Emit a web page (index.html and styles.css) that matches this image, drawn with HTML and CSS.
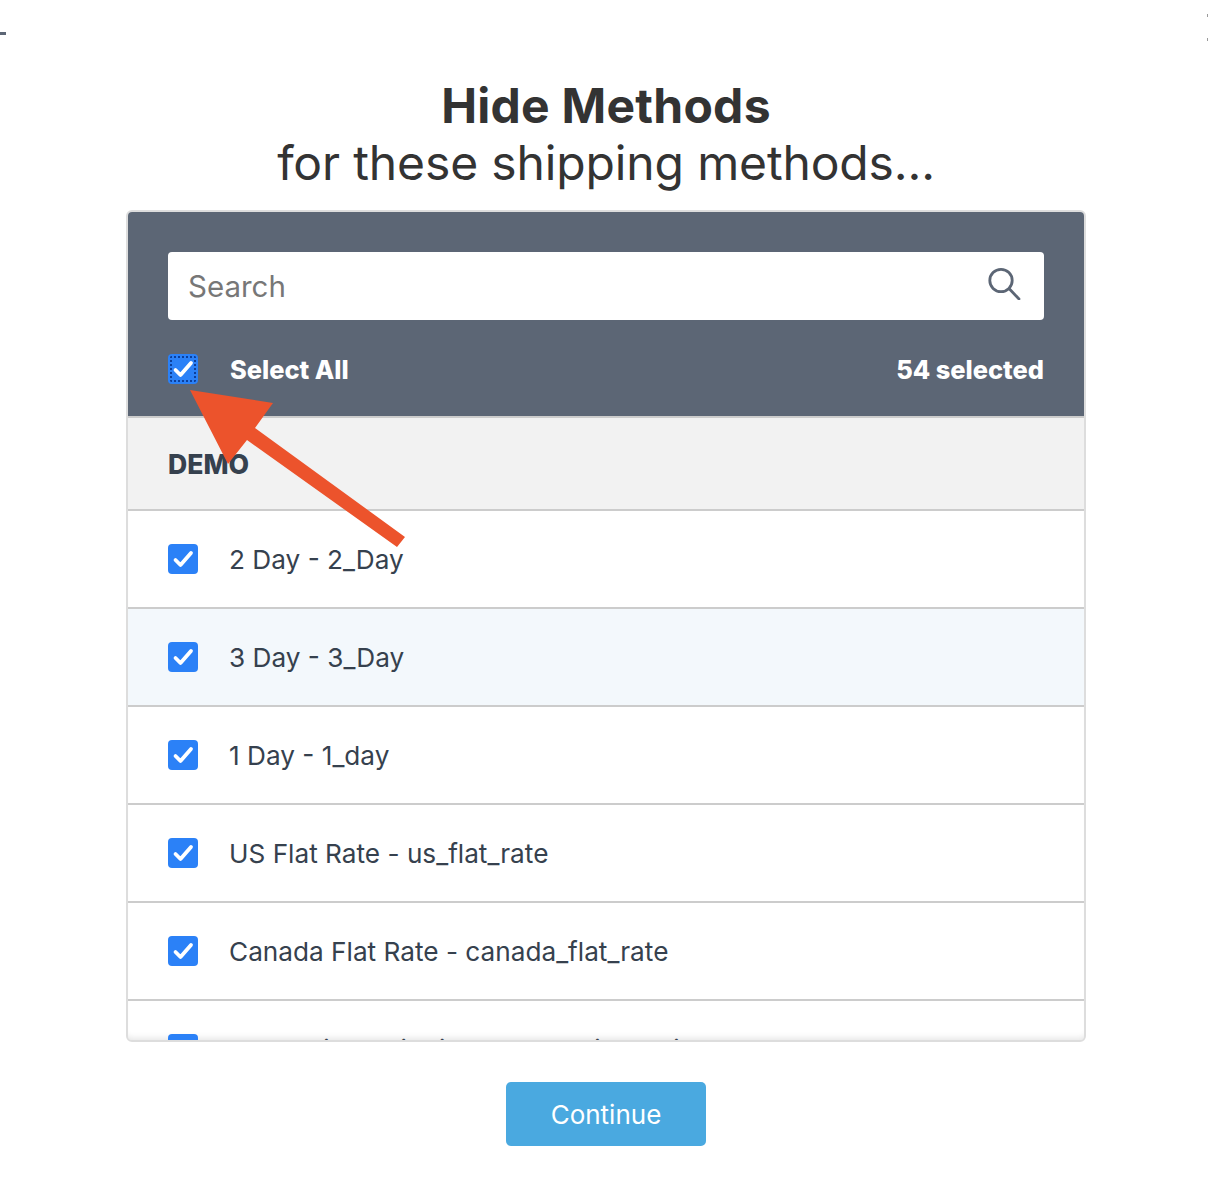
FILE: index.html
```
<!DOCTYPE html>
<html lang="en">
<head>
<meta charset="utf-8">
<title>Hide Methods</title>
<link rel="stylesheet" href="styles.css">
</head>
<body>
<span class="edge edge-left"></span>
<span class="edge edge-right-a"></span>
<span class="edge edge-right-b"></span>
<main class="page">
  <h1 class="title"><strong>Hide Methods</strong><span>for these shipping methods...</span></h1>
  <section class="card">
    <header class="card-head">
      <div class="search">
        <span class="search-text">Search</span>
        <svg class="search-icon" viewBox="0 0 34 34" width="34" height="34" fill="none" stroke="#5c6675" stroke-width="2.800" stroke-linecap="round"><circle cx="14" cy="14.500" r="11.200"/><path d="M22.500 23L32 33"/></svg>
      </div>
      <div class="select-row">
        <span class="check check-focus"><svg viewBox="0 0 30 30" width="30" height="30"><path d="M7.500 16l5 5L23 9" fill="none" stroke="#fff" stroke-width="3.800" stroke-linecap="round" stroke-linejoin="round"/></svg></span>
        <span class="select-label">Select All</span>
        <span class="count">54 selected</span>
      </div>
    </header>
    <div class="group">DEMO</div>
    <ul class="list">
      <li class="row"><span class="check"><svg viewBox="0 0 30 30" width="30" height="30"><path d="M7.500 16l5 5L23 9" fill="none" stroke="#fff" stroke-width="3.800" stroke-linecap="round" stroke-linejoin="round"/></svg></span>2 Day - 2_Day</li>
      <li class="row row-hover"><span class="check"><svg viewBox="0 0 30 30" width="30" height="30"><path d="M7.500 16l5 5L23 9" fill="none" stroke="#fff" stroke-width="3.800" stroke-linecap="round" stroke-linejoin="round"/></svg></span>3 Day - 3_Day</li>
      <li class="row"><span class="check"><svg viewBox="0 0 30 30" width="30" height="30"><path d="M7.500 16l5 5L23 9" fill="none" stroke="#fff" stroke-width="3.800" stroke-linecap="round" stroke-linejoin="round"/></svg></span>1 Day - 1_day</li>
      <li class="row"><span class="check"><svg viewBox="0 0 30 30" width="30" height="30"><path d="M7.500 16l5 5L23 9" fill="none" stroke="#fff" stroke-width="3.800" stroke-linecap="round" stroke-linejoin="round"/></svg></span>US Flat Rate - us_flat_rate</li>
      <li class="row"><span class="check"><svg viewBox="0 0 30 30" width="30" height="30"><path d="M7.500 16l5 5L23 9" fill="none" stroke="#fff" stroke-width="3.800" stroke-linecap="round" stroke-linejoin="round"/></svg></span>Canada Flat Rate - canada_flat_rate</li>
      <li class="row"><span class="check"><svg viewBox="0 0 30 30" width="30" height="30"><path d="M7.500 16l5 5L23 9" fill="none" stroke="#fff" stroke-width="3.800" stroke-linecap="round" stroke-linejoin="round"/></svg></span>Worldwide Shipping - worldwide_ship</li>
    </ul>
  </section>
  <button class="continue" type="button">Continue</button>
</main>
<svg class="arrow" viewBox="0 0 1208 1190" width="1208" height="1190"><polygon points="190,390 273,403 255,428 405,537 397,547 247,440 228,464" fill="#ec532c"/></svg>
</body>
</html>
```
FILE: styles.css
```
* { box-sizing: border-box; }
html, body { margin: 0; padding: 0; }
body {
  position: relative;
  width: 1208px;
  height: 1190px;
  overflow: hidden;
  background: #fff;
  font-family: "Inter", "Lato", sans-serif;
  color: #36414e;
}
.edge { position: absolute; background: #5c6675; }
.edge-left { left: 0; top: 32px; width: 6px; height: 3px; }
.edge-right-a { right: 0; top: 14px; width: 1px; height: 3px; background: #9a9a9a; }
.edge-right-b { right: 0; top: 38px; width: 1px; height: 3px; background: #9a9a9a; }
.page {
  display: flex;
  flex-direction: column;
  align-items: center;
  padding: 77px 0 0 4px;
}
.title {
  margin: 0 0 19px;
  display: flex;
  flex-direction: column;
  align-items: center;
  font-size: 48px;
  line-height: 57px;
  font-weight: 400;
  letter-spacing: -0.14px;
  color: #333;
}
.title strong { font-weight: 700; letter-spacing: 0.25px; }
.card {
  width: 960px;
  height: 832px;
  border: 2px solid #ddd;
  border-radius: 6px;
  overflow: hidden;
  background: #fff;
  box-shadow: inset 0 -7px 6px -5px rgba(0, 0, 0, 0.1);
}
.card-head {
  height: 206px;
  padding: 40px 40px 0;
  background: #5c6675;
  border-bottom: 2px solid #ccc;
}
.search {
  height: 68px;
  display: flex;
  align-items: center;
  justify-content: space-between;
  padding: 0 23px 0 20px;
  background: #fff;
  border-radius: 4px;
}
.search-text { font-size: 29.500px; color: #777; }
.search-icon { display: block; margin-top: -6px; }
.select-row {
  display: flex;
  align-items: center;
  margin-top: 33px;
  height: 32px;
  color: #fff;
  font-size: 25.400px;
  font-weight: 800;
}
.select-label { flex: 1; }
.check {
  flex: none;
  width: 30px;
  height: 30px;
  margin-right: 32px;
  background: #2b81f7;
  border-radius: 4px;
  display: block;
}
.check svg { display: block; }
.check-focus { outline: 2px dotted #0c3f9a; outline-offset: -4px; }
.group {
  height: 93px;
  padding-left: 40px;
  display: flex;
  align-items: center;
  background: #f2f2f2;
  border-bottom: 2px solid #ccc;
  font-size: 26.600px;
  font-weight: 800;
}
.list { margin: 0; padding: 0; list-style: none; }
.row {
  height: 98px;
  padding-left: 40px;
  display: flex;
  align-items: center;
  border-bottom: 2px solid #ccc;
  font-size: 26.200px;
}
.row .check { margin-right: 31px; }
.row-hover { background: #f3f8fc; }
.continue {
  margin-top: 40px;
  width: 200px;
  height: 64px;
  border: 0;
  border-radius: 5px;
  background: #4aa9e0;
  color: #fff;
  font: 400 26px "Inter", "Lato", sans-serif;
}
.arrow { position: absolute; left: 0; top: 0; pointer-events: none; }
```
